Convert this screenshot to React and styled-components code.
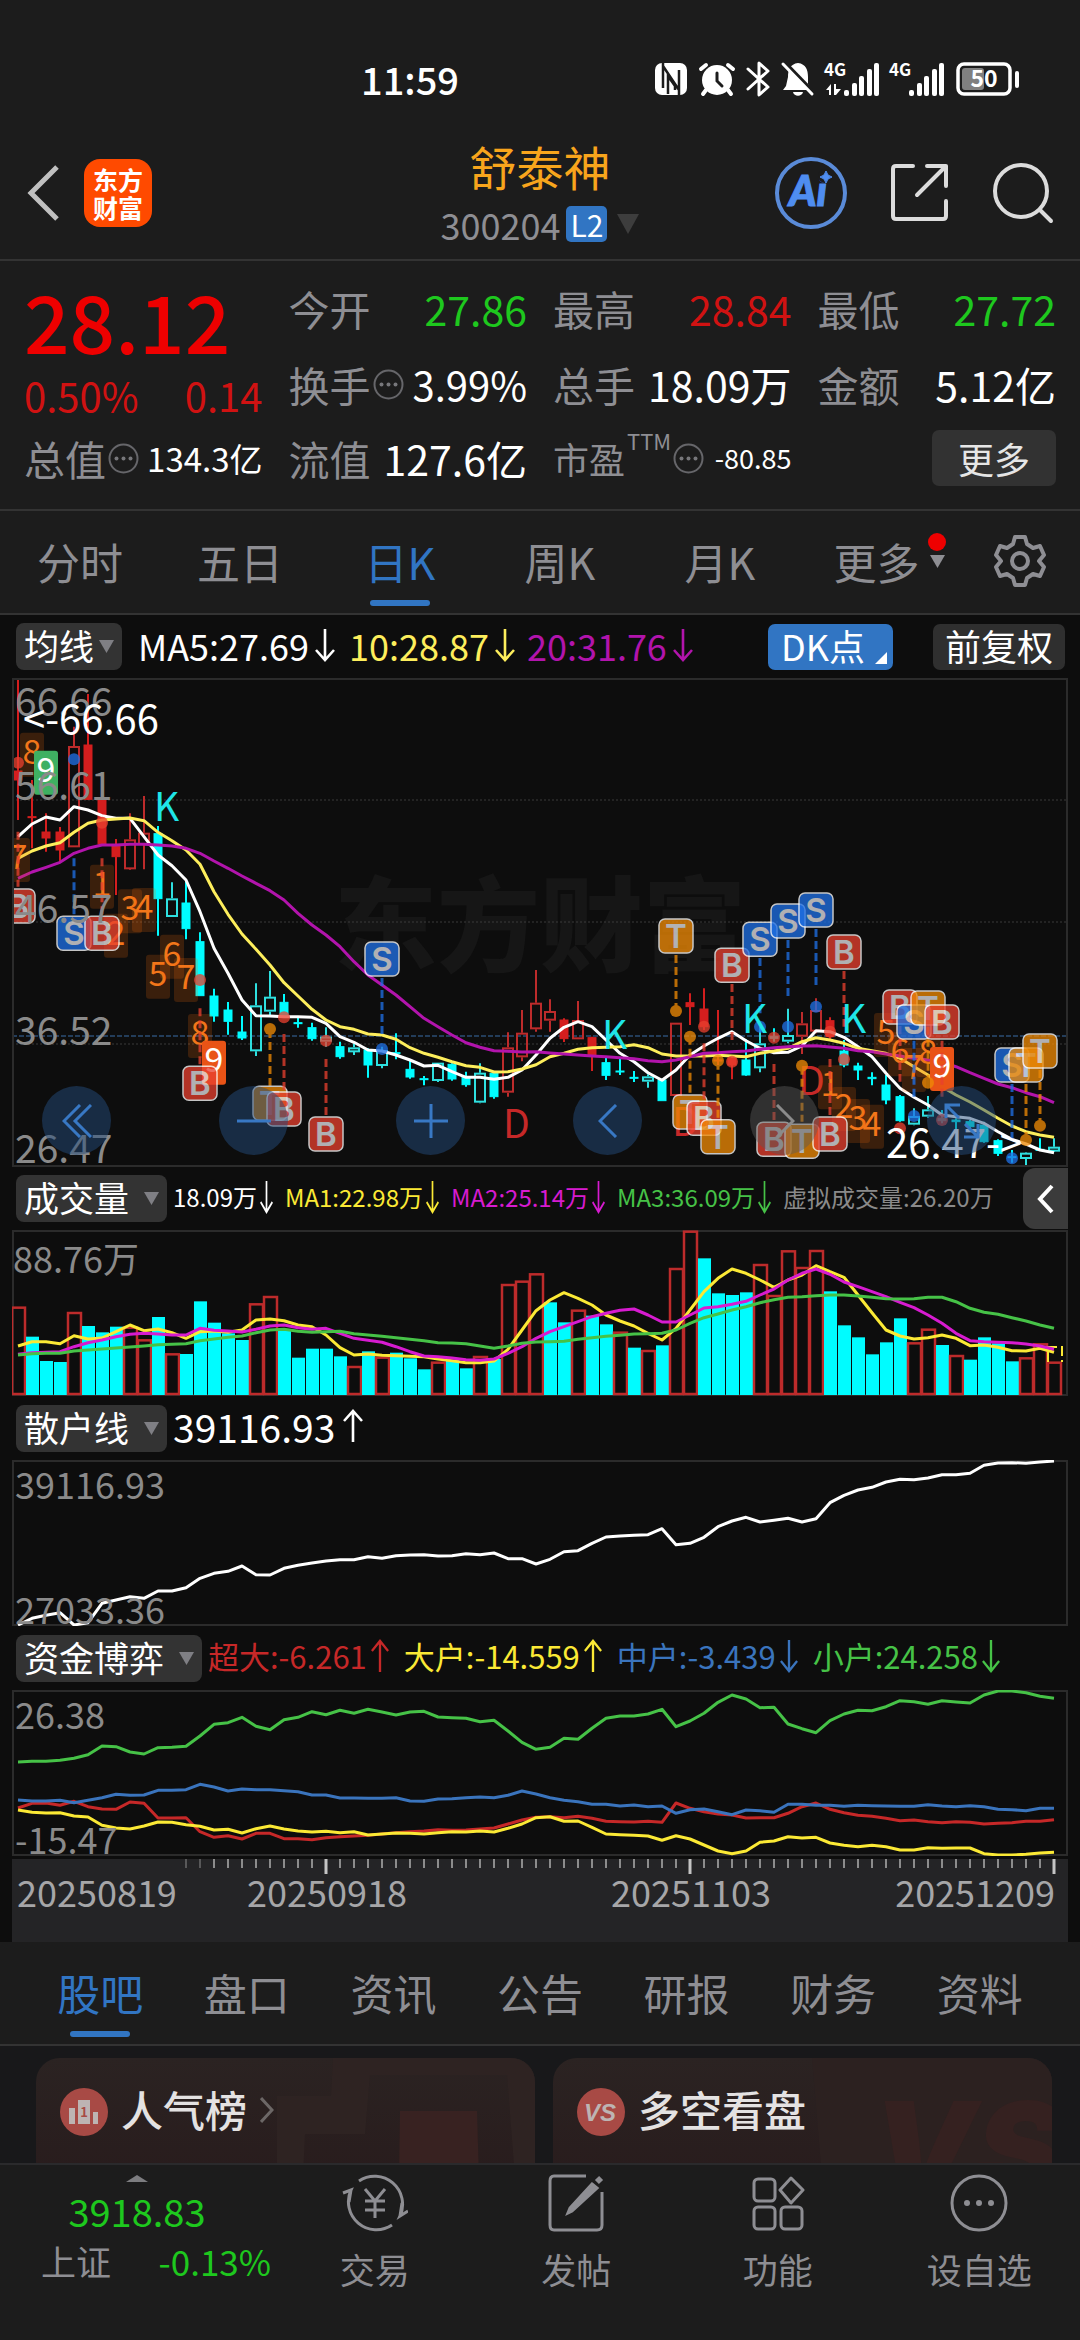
import React from 'react'
import styled, { createGlobalStyle } from 'styled-components'

const color = {
    page: '#1c1c1c',
    chart: '#0d0d0d',
    line: '#333333',
    frame: '#2b2b2b',
    grey: '#8e8e93',
    blue: '#3175c3',
    red: '#d01212',
    green: '#1ec81e',
    up: '#bd2b2b',
    down: '#00fcff',
    yellow: '#fbe935',
    purple: '#d71bd0',
    lime: '#46c247',
}

const GlobalStyle = createGlobalStyle`
    * {
        box-sizing: border-box;
    }

    body {
        margin: 0;
        background-color: ${color.page};
        font-family: "Noto Sans CJK SC", "Noto Sans", sans-serif;
        color: #FFFFFF;
    }

    button, select {
        margin: 0;
        padding: 0;
        border: none;
        background: none;
        font: inherit;
        color: inherit;
    }

    svg {
        display: block;
        flex-shrink: 0;
    }
`

const Page = styled.div`
    display: flex;
    flex-direction: column;
    height: 100vh;
    overflow: hidden;
`

/* status bar */

const StatusBar = styled.div`
    display: flex;
    justify-content: space-between;
    align-items: center;
    height: 120px;
    padding: 38px 60px 0 361px;
`

const Clock = styled.div`
    font-size: 38px;
    font-weight: 500;
    line-height: 40px;
`

const StatusIcons = styled.div`
    display: flex;
    align-items: center;
    gap: 12px;

    svg {
        overflow: visible;
    }
`

/* header */

const Header = styled.header`
    display: grid;
    grid-template-columns: 1fr auto 1fr;
    align-items: center;
    height: 141px;
    padding: 6px 26px 0;
    border-bottom: 2px solid ${color.line};
`

const HeaderSide = styled.div`
    display: flex;
    align-items: center;
    justify-content: ${(props) => props.$end ? 'flex-end' : 'flex-start'};
    gap: ${(props) => props.$end ? '42px' : '22px'};
`

const IconButton = styled.button`
    display: flex;
`

const Logo = styled.div`
    display: flex;
    align-items: center;
    justify-content: center;
    width: 68px;
    height: 68px;
    border-radius: 16px;
    background-color: #ff4a00;
    font-size: 25px;
    font-weight: 700;
    line-height: 28px;
    text-align: center;
`

const Title = styled.h1`
    margin: 0;
    font-size: 47px;
    font-weight: 400;
    line-height: 62px;
    color: #f8a51c;
    text-align: center;
`

const Code = styled.div`
    display: flex;
    align-items: center;
    justify-content: center;
    font-size: 36px;
    line-height: 54px;
    color: ${color.grey};
`

const Level = styled.span`
    margin: 0 10px 0 6px;
    padding: 0 4px;
    border-radius: 5px;
    background-color: ${color.blue};
    font-size: 30px;
    line-height: 36px;
    color: #FFFFFF;
`

/* quote */

const Quote = styled.section`
    display: grid;
    grid-template-columns: repeat(4, 1fr);
    column-gap: 26px;
    height: 250px;
    padding: 9px 24px 13px;
    border-bottom: 2px solid ${color.line};
`

const QuoteColumn = styled.div`
    display: grid;
    grid-template-rows: 76px 76px 72px;
`

const PriceBox = styled.div`
    grid-row: span 2;
    display: flex;
    flex-direction: column;
`

const Price = styled.div`
    font-size: 80px;
    font-weight: 500;
    line-height: 98px;
    color: #ee0000;
`

const Change = styled.div`
    display: flex;
    justify-content: space-between;
    font-size: 40px;
    line-height: 54px;
    color: ${color.red};
`

const Cell = styled.div`
    display: flex;
    align-items: center;
    justify-content: space-between;
    white-space: nowrap;
`

const Label = styled.span`
    display: flex;
    align-items: center;
    gap: 2px;
    font-size: ${(props) => props.$small ? '36px' : '41px'};
    line-height: 60px;
    color: ${color.grey};
`

const Sup = styled.sup`
    align-self: flex-start;
    font-size: 22px;
    line-height: 24px;
`

const Value = styled.span`
    font-size: ${(props) => props.$size || 41}px;
    line-height: 60px;
    color: ${(props) => props.$color || '#FFFFFF'};
`

const MoreButton = styled.button`
    width: 124px;
    height: 56px;
    margin-left: auto;
    border-radius: 7px;
    background-color: #323232;
    font-size: 36px;
    line-height: 50px;
    color: #e6e6e6;
`

/* tabs */

const Tabs = styled.nav`
    display: grid;
    grid-template-columns: ${(props) => props.$columns};
    height: 104px;
    padding: 0 ${(props) => props.$inset ? '27px' : '0'};
    border-bottom: 2px solid ${color.line};
`

const Tab = styled.button`
    position: relative;
    display: flex;
    align-items: center;
    justify-content: center;
    gap: 10px;
    min-width: 0;
    padding: 0 0 2px ${(props) => props.$menu ? '18px' : '0'};
    font-size: 43px;
    line-height: 60px;
    white-space: nowrap;
    color: ${(props) => props.$active ? color.blue : color.grey};

    &::after {
        content: '';
        display: ${(props) => props.$active ? 'block' : 'none'};
        position: absolute;
        bottom: 7px;
        left: 50%;
        width: 60px;
        height: 6px;
        margin-left: -30px;
        border-radius: 3px;
        background-color: ${color.blue};
    }
`

const Dot = styled.span`
    position: absolute;
    top: 22px;
    right: 14px;
    width: 18px;
    height: 18px;
    border-radius: 50%;
    background-color: #ee0000;
`

/* charts */

const Charts = styled.main`
    padding: 0 12px;
    background-color: ${color.chart};
`

const Bar = styled.div`
    display: flex;
    align-items: center;
    height: ${(props) => props.$height || 64}px;
    padding-left: 4px;
    gap: ${(props) => props.$gap || 6}px;
    white-space: nowrap;
`

const Picker = styled.label`
    position: relative;
    display: flex;
    align-items: center;
    border-radius: 8px;
    background-color: #333333;

    svg {
        position: absolute;
        right: 8px;
        pointer-events: none;
    }
`

const Select = styled.select`
    appearance: none;
    height: 47px;
    padding: 0 ${(props) => props.$tight ? '27px' : '37px'} 4px 8px;
    font-size: 35px;
    line-height: 43px;
`

const Reading = styled.span`
    display: flex;
    align-items: center;
    gap: ${(props) => props.$gap || 8}px;
    margin-right: ${(props) => props.$space || 6}px;
    padding-bottom: 4px;
    font-size: ${(props) => props.$size}px;
    line-height: 44px;
    color: ${(props) => props.$color || '#FFFFFF'};
`

const Tools = styled.div`
    display: flex;
    gap: 40px;
    margin-left: auto;
    padding-right: 3px;
`

const Tool = styled.button`
    position: relative;
    display: flex;
    align-items: center;
    height: 46px;
    padding: 0 ${(props) => props.$active ? '28px 3px 13px' : '12px 3px'};
    border-radius: 7px;
    background-color: ${(props) => props.$active ? color.blue : '#2f2f2f'};
    font-size: 36px;
    line-height: 43px;

    svg {
        position: absolute;
        right: 6px;
        bottom: 6px;
    }
`

const Pane = styled.div`
    position: relative;
`

const Chart = styled.svg`
    width: 100%;
    height: auto;
    font-family: "Noto Sans CJK SC", sans-serif;
`

const ChartButtons = styled.div`
    position: absolute;
    right: 72px;
    bottom: 12px;
    left: 30px;
    display: flex;
    justify-content: space-between;
`

const RoundButton = styled.button`
    display: flex;
    align-items: center;
    justify-content: center;
    width: 69px;
    height: 69px;
    border-radius: 50%;
    background-color: ${(props) => props.$off ? 'rgba(90, 90, 90, 0.45)' : 'rgba(36, 76, 124, 0.5)'};
    color: ${(props) => props.$off ? '#8b8b8b' : '#3878c4'};
`

const Collapse = styled.button`
    display: flex;
    align-items: center;
    justify-content: center;
    width: 45px;
    height: 61px;
    margin-left: auto;
    border-radius: 12px 0 0 12px;
    background-color: #3b3b3b;
`

const Axis = styled.div`
    margin-top: 3px;
    background-color: #242426;
`

/* cards */

const Cards = styled.section`
    display: grid;
    grid-template-columns: 1fr 1fr;
    gap: 18px;
    flex: 1;
    min-height: 0;
    padding: 12px 28px 0 36px;
    overflow: hidden;
    background-color: #18181a;
`

const Card = styled.article`
    position: relative;
    display: flex;
    align-items: flex-start;
    gap: 13px;
    min-height: 140px;
    padding: 24px;
    border-radius: 24px;
    overflow: hidden;
    background: linear-gradient(#2b2322, #281b1c);
    font-size: 42px;
    font-weight: 500;
    line-height: 54px;
    color: #e4e2e2;

    > svg {
        margin-top: 6px;
    }
`

const CardArt = styled.div`
    position: absolute;
    top: 0;
    right: 0;
`

/* bottom bar */

const BottomBar = styled.footer`
    display: flex;
    height: 177px;
    border-top: 2px solid #2a2a2c;
    background-color: ${color.page};
`

const Market = styled.button`
    display: flex;
    flex-direction: column;
    align-items: center;
    width: 274px;
    padding-top: 10px;
    font-size: 38px;
    line-height: 50px;
    color: ${color.green};

    > svg {
        margin-bottom: 4px;
    }
`

const MarketRow = styled.span`
    display: flex;
    justify-content: space-between;
    width: 230px;
    margin-left: 38px;
    font-size: 35px;
`

const Muted = styled.span`
    color: ${color.grey};
`

const Action = styled.button`
    display: flex;
    flex: 1;
    flex-direction: column;
    align-items: center;
    gap: 11px;
    padding-top: 8px;
    font-size: 35px;
    line-height: 50px;
    color: ${color.grey};
`

const STEP = 14
const LEFT = 6
const xOf = (i) => LEFT + i * STEP

// [high, body top, body bottom, low, kind] in thirds of a pixel.
// kind: R / C solid, r / c hollow
const candles = [
    [24, 303, 330, 450, 'R'], [330, 440, 443, 535, 'R'], [430, 486, 504, 545, 'R'], [471, 486, 540, 576, 'R'],
    [170, 228, 532, 532, 'r'], [72, 225, 388, 390, 'R'], [360, 388, 522, 522, 'R'], [507, 528, 560, 675, 'R'],
    [430, 508, 598, 600, 'r'], [378, 488, 525, 598, 'r'], [468, 491, 686, 797, 'C'], [637, 685, 741, 741, 'c'],
    [632, 699, 776, 808, 'C'], [787, 815, 977, 977, 'C'], [956, 978, 1038, 1055, 'C'], [996, 1020, 1054, 1094, 'C'],
    [1038, 1086, 1104, 1110, 'C'], [940, 1006, 1144, 1158, 'c'], [903, 980, 1025, 1035, 'c'], [972, 997, 1040, 1040, 'C'],
    [1038, 1058, 1061, 1073, 'C'], [1058, 1073, 1106, 1112, 'C'], [1072, 1100, 1115, 1130, 'c'], [1115, 1130, 1160, 1166, 'C'],
    [1120, 1132, 1145, 1155, 'c'], [1135, 1140, 1185, 1223, 'C'], [1130, 1140, 1188, 1195, 'c'], [1090, 1148, 1151, 1168, 'C'],
    [1173, 1198, 1221, 1226, 'C'], [1218, 1226, 1229, 1246, 'C'], [1178, 1178, 1233, 1236, 'c'], [1180, 1183, 1227, 1232, 'C'],
    [1205, 1220, 1244, 1250, 'C'], [1180, 1208, 1298, 1300, 'c'], [1208, 1210, 1280, 1286, 'C'], [1087, 1132, 1268, 1280, 'r'],
    [1020, 1088, 1162, 1174, 'r'], [900, 998, 1078, 1085, 'r'], [988, 1023, 1052, 1085, 'r'], [1045, 1050, 1106, 1116, 'R'],
    [993, 1050, 1108, 1108, 'r'], [1100, 1103, 1158, 1203, 'R'], [1160, 1178, 1216, 1230, 'C'], [1165, 1203, 1206, 1215, 'C'],
    [1203, 1222, 1225, 1236, 'C'], [1213, 1219, 1235, 1253, 'c'], [1226, 1230, 1292, 1292, 'C'], [1058, 1058, 1278, 1278, 'r'],
    [970, 998, 1010, 1065, 'R'], [955, 1017, 1070, 1080, 'R'], [1020, 1170, 1173, 1185, 'R'], [1160, 1165, 1185, 1228, 'R'],
    [1108, 1170, 1215, 1217, 'C'], [1070, 1120, 1195, 1207, 'c'], [1075, 1100, 1105, 1115, 'C'], [1016, 1095, 1115, 1120, 'c'],
    [1026, 1060, 1100, 1152, 'r'], [985, 1020, 1085, 1090, 'r'], [1042, 1052, 1100, 1110, 'R'], [1110, 1143, 1185, 1192, 'C'],
    [1178, 1188, 1200, 1230, 'C'], [1207, 1222, 1226, 1246, 'C'], [1215, 1245, 1290, 1303, 'C'], [1275, 1280, 1352, 1355, 'C'],
    [1315, 1338, 1364, 1366, 'c'], [1278, 1318, 1340, 1343, 'c'], [1320, 1345, 1352, 1360, 'C'], [1345, 1350, 1355, 1385, 'C'],
    [1350, 1355, 1370, 1380, 'C'], [1355, 1365, 1415, 1418, 'C'], [1408, 1412, 1450, 1458, 'C'], [1440, 1460, 1463, 1478, 'C'],
    [1447, 1448, 1467, 1490, 'c'], [1405, 1438, 1441, 1442, 'C'], [1405, 1430, 1441, 1445, 'c'],
]

const ma5 = [500, 462, 441, 450, 410, 420, 437, 445, 445, 500, 555, 587, 630, 725, 835, 910, 990, 1037, 1038, 1040, 1040, 1042, 1060, 1100, 1117, 1140, 1143, 1155, 1170, 1188, 1186, 1205, 1222, 1222, 1228, 1222, 1200, 1155, 1105, 1072, 1055, 1070, 1110, 1150, 1175, 1208, 1231, 1200, 1155, 1128, 1105, 1085, 1112, 1135, 1148, 1147, 1128, 1082, 1085, 1102, 1130, 1160, 1210, 1255, 1282, 1305, 1335, 1340, 1345, 1360, 1385, 1408, 1422, 1440, 1448]
const ma10 = [565, 543, 528, 518, 487, 460, 450, 447, 444, 452, 487, 512, 540, 583, 665, 733, 792, 838, 885, 938, 978, 1018, 1050, 1070, 1078, 1092, 1095, 1108, 1133, 1150, 1162, 1175, 1187, 1192, 1206, 1205, 1197, 1184, 1160, 1150, 1138, 1133, 1132, 1130, 1124, 1133, 1152, 1158, 1158, 1158, 1156, 1158, 1160, 1150, 1143, 1135, 1115, 1103, 1110, 1120, 1135, 1142, 1150, 1165, 1190, 1215, 1250, 1275, 1296, 1320, 1345, 1368, 1385, 1395, 1402]
const ma20 = [625, 606, 592, 577, 550, 535, 525, 525, 523, 523, 525, 528, 535, 550, 573, 595, 618, 640, 662, 690, 730, 765, 795, 830, 875, 915, 945, 975, 1010, 1045, 1070, 1095, 1118, 1132, 1142, 1144, 1146, 1145, 1149, 1152, 1155, 1158, 1160, 1163, 1166, 1172, 1175, 1170, 1160, 1150, 1148, 1145, 1143, 1138, 1133, 1130, 1128, 1127, 1131, 1135, 1142, 1145, 1152, 1158, 1165, 1170, 1177, 1190, 1208, 1225, 1242, 1253, 1268, 1280, 1298]

// [letter, day, badge y, dash from, dash to, dot y]
const signals = [
    ['B', 0, 708, 485, 650, 278], ['S', 4, 790, 565, 735, 268], ['B', 6, 790, 565, 735, 458], ['B', 13, 1240, 1015, 1185, 930],
    ['T', 18, 1300, 1080, 1248, 1077], ['B', 19, 1317, 1092, 1260, 1042], ['B', 22, 1392, 1167, 1335, 1112], ['S', 26, 867, 924, 1095, 1137],
    ['T', 47, 798, 855, 1010, 1023], ['T', 48, 1326, 1100, 1270, 1100], ['B', 49, 1345, 1120, 1290, 1070], ['T', 50, 1400, 1175, 1345, 1172],
    ['B', 51, 886, 942, 1110, 1175], ['S', 53, 808, 864, 1030, 1070], ['S', 55, 753, 810, 978, 1070], ['S', 57, 720, 777, 945, 1010],
    ['B', 54, 1408, 1182, 1350, 1103], ['T', 56, 1414, 1190, 1355, 1187], ['B', 58, 1392, 1167, 1335, 1085], ['B', 59, 846, 903, 1070, 1168],
    ['B', 63, 1011, 1068, 1235, 1375], ['S', 64, 1056, 1112, 1280, 1338], ['T', 65, 1014, 1070, 1235, 1238], ['B', 66, 1056, 1112, 1280, 1350],
    ['S', 71, 1185, 1242, 1410, 1465], ['T', 72, 1185, 1242, 1408, 1410], ['T', 73, 1143, 1200, 1350, 1367],
]

const signalColor = { B: '#e8402f', S: '#1f70e6', T: '#f08a05' }

// [digit, day, center y, background for the ninth day]
const counts = [
    ['8', 1, 254], ['9', 2, 308, '#3fb062'], ['7', 0, 570], ['1', 6, 650], ['2', 7, 797], ['3', 8, 724], ['4', 9, 720],
    ['5', 10, 920], ['6', 11, 860], ['7', 12, 930], ['8', 13, 1098], ['9', 14, 1178, '#e95316'],
    ['1', 58, 1252], ['2', 59, 1317], ['3', 60, 1353], ['4', 61, 1370], ['5', 62, 1095], ['6', 63, 1153], ['7', 64, 1200],
    ['8', 65, 1155], ['9', 66, 1197, '#e95316'],
]

const volumes = '440r 530c 603c 606c 456r 498c 517c 500c 500r 538r 471c 580r 582c 424c 488c 520c 540c 430r 408r 512c 593c 566c 566c 589c 618r 574c 590r 578c 595c 628c 605r 600c 625c 588r 597c 372r 362r 340r 427c 487c 449r 467c 493c 515r 563c 570r 556c 324r 212r 295c 400c 405c 397c 312r 405r 271r 321r 270r 394c 496c 532c 583c 547c 475c 547r 506r 555c 585r 599c 532c 550c 604c 592r 550r 605r'.split(' ')

const vol1 = [558, 545, 545, 551, 527, 537, 534, 515, 495, 512, 507, 518, 535, 515, 513, 517, 510, 480, 477, 482, 495, 500, 525, 563, 585, 582, 586, 587, 589, 590, 597, 602, 608, 608, 603, 568, 510, 452, 420, 398, 415, 435, 465, 483, 498, 520, 540, 505, 450, 395, 355, 327, 340, 360, 382, 360, 345, 317, 335, 352, 405, 458, 510, 528, 537, 533, 525, 535, 557, 555, 562, 572, 573, 565, 577]
const vol2 = [583, 578, 577, 575, 560, 548, 540, 530, 523, 520, 522, 525, 525, 505, 511, 513, 516, 508, 498, 495, 503, 508, 505, 520, 535, 541, 547, 560, 575, 588, 590, 594, 599, 601, 597, 580, 560, 535, 515, 500, 485, 470, 460, 451, 447, 465, 486, 486, 465, 444, 440, 433, 424, 405, 387, 360, 340, 327, 343, 366, 380, 395, 410, 427, 443, 465, 490, 520, 542, 545, 547, 548, 552, 558, 568]
const vol3 = [585, 581, 580, 580, 573, 570, 567, 564, 561, 558, 554, 553, 551, 542, 537, 532, 528, 518, 510, 508, 514, 517, 515, 514, 521, 525, 529, 533, 538, 542, 548, 549, 551, 558, 565, 558, 550, 546, 545, 544, 538, 533, 529, 526, 522, 521, 520, 510, 490, 473, 462, 450, 440, 428, 419, 412, 410, 407, 405, 405, 408, 412, 416, 417, 416, 412, 412, 425, 445, 457, 463, 473, 483, 495, 505]

const retail = [675, 655, 646, 638, 675, 668, 610, 600, 590, 595, 573, 573, 563, 535, 520, 514, 498, 524, 525, 505, 496, 489, 483, 479, 479, 470, 475, 467, 465, 464, 468, 467, 461, 464, 459, 476, 476, 492, 478, 455, 452, 430, 411, 408, 406, 404, 386, 434, 430, 412, 380, 363, 352, 366, 361, 355, 366, 356, 308, 286, 270, 262, 246, 238, 239, 234, 224, 224, 220, 196, 189, 188, 190, 186, 183]

const fundSmall = [396, 394, 394, 391, 385, 374, 348, 350, 366, 372, 353, 352, 349, 318, 283, 278, 262, 289, 299, 269, 262, 245, 254, 241, 250, 238, 246, 255, 246, 244, 261, 263, 265, 275, 271, 303, 337, 358, 352, 325, 328, 295, 265, 258, 258, 252, 238, 290, 273, 250, 217, 195, 207, 233, 232, 282, 296, 308, 272, 252, 241, 242, 230, 212, 215, 223, 212, 216, 219, 195, 183, 183, 188, 199, 205]
const fundMiddle = [510, 513, 513, 511, 518, 511, 503, 493, 496, 495, 481, 481, 479, 463, 471, 483, 477, 479, 479, 482, 485, 495, 495, 504, 504, 505, 505, 503, 513, 514, 507, 506, 503, 501, 503, 496, 483, 492, 503, 511, 515, 523, 523, 528, 525, 530, 528, 550, 539, 537, 545, 554, 540, 542, 547, 523, 523, 526, 526, 529, 526, 527, 528, 529, 529, 524, 528, 530, 527, 530, 538, 539, 542, 535, 535]
const fundHuge = [534, 520, 519, 526, 514, 530, 537, 538, 516, 520, 564, 564, 563, 605, 622, 617, 627, 610, 610, 626, 626, 629, 623, 620, 618, 616, 612, 608, 605, 603, 599, 601, 600, 597, 594, 582, 570, 562, 560, 563, 559, 565, 574, 575, 576, 574, 577, 519, 535, 545, 552, 555, 564, 563, 563, 550, 530, 519, 538, 548, 556, 559, 565, 572, 570, 575, 578, 575, 577, 582, 580, 578, 574, 574, 569]
const fundBig = [540, 547, 549, 548, 558, 561, 586, 594, 597, 588, 576, 577, 584, 589, 600, 598, 609, 596, 588, 597, 603, 606, 604, 608, 605, 615, 612, 609, 610, 612, 608, 605, 606, 603, 606, 595, 582, 563, 560, 574, 573, 592, 612, 614, 616, 618, 631, 617, 627, 645, 663, 671, 663, 637, 633, 620, 624, 622, 639, 646, 650, 646, 650, 660, 660, 653, 655, 654, 654, 671, 675, 675, 673, 669, 667]

const Line = ({ data, top, stroke }) => (
    <polyline
        points={data.map((v, i) => `${xOf(i)},${((v - top) / 3).toFixed(1)}`).join(' ')}
        fill="none"
        stroke={stroke}
        strokeWidth="3"
        strokeLinejoin="round"
    />
)

const Frame = ({ height }) => (
    <rect x="1" y="1" width="1054" height={height - 2} fill="none" stroke={color.frame} strokeWidth="2" />
)

const Triangle = ({ size = 15, fill = '#7f7f84' }) => (
    <svg width={size} height={size - 2} viewBox="0 0 10 9" preserveAspectRatio="none">
        <path d="M0 0H10L5 9Z" fill={fill} />
    </svg>
)

const Arrow = ({ up, width = 20 }) => (
    <svg width={width} height="34" viewBox="0 0 20 34" preserveAspectRatio="none" fill="none" stroke="currentColor" strokeWidth="2.6">
        {up ? <path d="M10 33V2M1 12L10 2L19 12" /> : <path d="M10 1V32M1 22L10 32L19 22" />}
    </svg>
)

const Ellipsis = () => (
    <svg width="31" height="31" viewBox="0 0 31 31" fill="#77777b">
        <circle cx="15.500" cy="15.500" r="14" fill="none" stroke="#66666a" strokeWidth="2" />
        <circle cx="8.500" cy="15.500" r="2" />
        <circle cx="15.500" cy="15.500" r="2" />
        <circle cx="22.500" cy="15.500" r="2" />
    </svg>
)

const Signal = ({ data }) => (
    <svg width="53" height="34" viewBox="0 0 53 34" fill="#FFFFFF">
        <text x="-2" y="14" fontSize="17" fontWeight="700">4G</text>
        {data && <path d="M0 28L5 22V33H3V28ZM10 22V27H15L10 33H8V22Z" />}
        <rect x="18" y="28" width="5" height="6" rx="2" />
        <rect x="26" y="21" width="5" height="13" rx="2" />
        <rect x="33" y="14" width="5" height="20" rx="2" />
        <rect x="41" y="7" width="5" height="27" rx="2" />
        <rect x="48" y="1" width="5" height="33" rx="2" />
    </svg>
)

const IndicatorSelect = ({ name, tight }) => (
    <Picker>
        <Select aria-label={name} $tight={tight}>
            <option>{name}</option>
        </Select>
        <Triangle />
    </Picker>
)

const Candle = ({ i, data }) => {
    const [high, top, bottom, low, kind] = data.map((v) => typeof v === 'number' ? (v - 24) / 3 : v)
    const rising = kind.toLowerCase() === 'r'
    const hollow = kind === 'r' || kind === 'c'
    const fill = rising ? (hollow ? color.up : '#d41e1e') : (hollow ? '#2ee0e0' : color.down)
    const x = xOf(i)

    return (
        <g stroke={fill} strokeWidth="2">
            <path d={`M${x} ${high}V${top}M${x} ${bottom}V${low}`} />
            {hollow
                ? <rect x={x - 5} y={top + 1} width="10" height={Math.max(bottom - top - 2, 3)} fill="none" />
                : <rect x={x - 4} y={top} width="8" height={bottom - top} fill={fill} strokeWidth="1" />}
        </g>
    )
}

const SignalBadge = ({ data }) => {
    const [letter, day, y, from, to, dot] = data
    const x = xOf(day)
    const fill = signalColor[letter]
    const cy = (y - 24) / 3

    return (
        <g opacity="0.76">
            <path d={`M${x} ${(from - 24) / 3}V${(to - 24) / 3}`} stroke={fill} strokeWidth="3" strokeDasharray="8 4" />
            <circle cx={x} cy={(dot - 24) / 3} r="6" fill={fill} />
            <rect x={x - 17} y={cy - 17} width="34" height="34" rx="6" fill={fill} stroke="#FFFFFF" strokeWidth="1.500" />
            <text x={x} y={cy + 12} fontSize="33" fontWeight="600" fontFamily="Inter, sans-serif" textAnchor="middle" fill="#e4e4e8">{letter}</text>
        </g>
    )
}

const Count = ({ data }) => {
    const [digit, day, y, background] = data
    const x = xOf(day)
    const cy = (y - 24) / 3

    return (
        <g>
            <rect x={x - 12} y={cy - 22} width="24" height="44" rx="3" fill={background || '#f26a0c'} fillOpacity={background ? 1 : 0.2} />
            <text x={x} y={cy + 9} fontSize="34" textAnchor="middle" fill={background ? '#FFFFFF' : '#f3761a'}>{digit}</text>
        </g>
    )
}

const PriceChart = () => (
    <Chart viewBox="0 0 1056 489">
        <text x="322" y="286" fontSize="103" fontWeight="900" fill="#161616">东方财富</text>
        <path d="M0 122H1056M0 244H1056M0 366H1056" stroke="#3a3a3a" strokeWidth="1" strokeDasharray="2 2" />
        <path d="M0 358H1056" stroke="#3a6ea8" strokeWidth="1" strokeDasharray="5 2" />
        {candles.map((item, i) => <Candle key={i} i={i} data={item} />)}
        <Line data={ma5} top={24} stroke="#FFFFFF" />
        <Line data={ma10} top={24} stroke="#fdee5c" />
        <Line data={ma20} top={24} stroke="#b214ac" />
        <g fontSize="39" fill="#c62828">
            <text x="491" y="460">D</text>
            <text x="786" y="417">D</text>
            <text x="660" y="458">D</text>
        </g>
        {counts.map((item, i) => <Count key={i} data={item} />)}
        {signals.map((item, i) => <SignalBadge key={i} data={item} />)}
        <g fontSize="39" fill="#1fe5e8">
            <text x="142" y="143">K</text>
            <text x="590" y="371">K</text>
            <text x="730" y="355">K</text>
            <text x="829" y="355">K</text>
        </g>
        <g fontSize="39" fill="#8a8a8a">
            <text x="3" y="38">66.66</text>
            <text x="3" y="122">56.61</text>
            <text x="3" y="245">46.57</text>
            <text x="3" y="367">36.52</text>
            <text x="3" y="485">26.47</text>
        </g>
        <g fontSize="40" fill="#FFFFFF">
            <text x="11" y="56">&lt;-66.66</text>
            <text x="874" y="480">26.47-&gt;</text>
        </g>
        <Frame height={489} />
    </Chart>
)

const VolumeChart = () => (
    <Chart viewBox="0 0 1056 166">
        <Frame height={166} />
        <text x="1" y="43" fontSize="36" fill="#8a8a8a">88.76万</text>
        {volumes.map((item, i) => {
            const y = (parseInt(item, 10) - 210) / 3
            return item.endsWith('r')
                ? <rect key={i} x={xOf(i) - 6} y={y + 1} width="13" height={163 - y} fill="none" stroke={color.up} strokeWidth="2.500" />
                : <rect key={i} x={xOf(i) - 6} y={y} width="13" height={165 - y} fill={color.down} />
        })}
        <path d={`M${xOf(74) - 6} 132V117H${xOf(74) + 8}V132`} fill="none" stroke={color.yellow} strokeWidth="2" strokeDasharray="10 4" />
        <Line data={vol1} top={210} stroke={color.yellow} />
        <Line data={vol2} top={210} stroke={color.purple} />
        <Line data={vol3} top={210} stroke={color.lime} />
    </Chart>
)

const RetailChart = () => (
    <Chart viewBox="0 0 1056 166">
        <Frame height={166} />
        <Line data={retail} top={180} stroke="#FFFFFF" />
        <g fontSize="36" fill="#8a8a8a">
            <text x="3" y="39">39116.93</text>
            <text x="3" y="164">27033.36</text>
        </g>
    </Chart>
)

const FundChart = () => (
    <Chart viewBox="0 0 1056 166">
        <Frame height={166} />
        <Line data={fundSmall} top={180} stroke={color.lime} />
        <Line data={fundHuge} top={180} stroke="#c62828" />
        <Line data={fundMiddle} top={180} stroke="#3a74bd" />
        <Line data={fundBig} top={180} stroke={color.yellow} />
        <g fontSize="36" fill="#8a8a8a">
            <text x="3" y="39">26.38</text>
            <text x="3" y="164">-15.47</text>
        </g>
    </Chart>
)

const majorTicks = [22, 48, 74]

const TimeAxis = () => (
    <Axis>
        <Chart viewBox="0 0 1056 83">
            {Array.from({ length: 63 }, (_, n) => n + 12).map((i) => (
                <path
                    key={i}
                    d={`M${xOf(i)} 0V${majorTicks.includes(i) ? 15 : 9}`}
                    stroke={majorTicks.includes(i) ? '#c4c4c4' : '#8c8c8c'}
                    strokeOpacity={i < 14 ? 0.5 : 1}
                    strokeWidth={majorTicks.includes(i) ? 3 : 2}
                />
            ))}
            <g fontSize="36" fill="#a6a6a8">
                <text x="5" y="48">20250819</text>
                <text x="315" y="48" textAnchor="middle">20250918</text>
                <text x="679" y="48" textAnchor="middle">20251103</text>
                <text x="1043" y="48" textAnchor="end">20251209</text>
            </g>
        </Chart>
    </Axis>
)

const periods = ['分时', '五日', '日K', '周K', '月K']
const sections = ['股吧', '盘口', '资讯', '公告', '研报', '财务', '资料']

const volumeReadings = [
    ['18.09万', '#FFFFFF'],
    ['MA1:22.98万', color.yellow],
    ['MA2:25.14万', color.purple],
    ['MA3:36.09万', color.lime],
]

const fundReadings = [
    ['超大:-6.261', '#c62828', true],
    ['大户:-14.559', color.yellow, true],
    ['中户:-3.439', '#3a74bd', false],
    ['小户:24.258', color.lime, false],
]

const App = () => {
    return (
        <>
            <GlobalStyle />
            <Page>
                <StatusBar>
                    <Clock>11:59</Clock>
                    <StatusIcons>
                        <svg width="32" height="32" viewBox="0 0 32 32">
                            <rect width="32" height="32" rx="7" fill="#FFFFFF" />
                            <path d="M8 0V25M8 3L24 27M24 32V7M13 31V13L20 23V27" fill="none" stroke="#1c1c1c" strokeWidth="2.500" />
                        </svg>
                        <svg width="36" height="34" viewBox="0 0 36 34" stroke="#FFFFFF" strokeWidth="4" strokeLinecap="round">
                            <circle cx="18" cy="18" r="15" fill="#FFFFFF" stroke="none" />
                            <path d="M2 7L7 3M34 7L29 3M7 28L4 32M29 28L32 32" />
                            <path d="M18 11V19L23 24" fill="none" stroke="#1c1c1c" strokeWidth="3" />
                        </svg>
                        <svg width="23" height="36" viewBox="0 0 23 36" fill="none" stroke="#FFFFFF" strokeWidth="3">
                            <path d="M1 8L21 26L12 34V2L21 10L1 28" strokeLinejoin="round" strokeLinecap="round" />
                        </svg>
                        <svg width="32" height="34" viewBox="0 0 32 34" fill="#FFFFFF">
                            <path d="M16 1C8 2 6 8 6 15L4 24L1 28H29L26 22V15C26 8 24 2 16 1ZM11 30H21C20 35 12 35 11 30Z" />
                            <path d="M3 1L32 31" stroke="#1c1c1c" strokeWidth="4" />
                            <path d="M1 2L30 32" stroke="#FFFFFF" strokeWidth="3" strokeLinecap="round" />
                        </svg>
                        <Signal data />
                        <Signal />
                        <svg width="64" height="34" viewBox="0 0 64 34">
                            <rect x="2" y="2" width="52" height="30" rx="6" fill="none" stroke="#FFFFFF" strokeWidth="3.500" />
                            <rect x="6" y="6" width="22" height="22" rx="3" fill="#808080" />
                            <rect x="59" y="9" width="4" height="17" rx="2" fill="#FFFFFF" />
                            <text x="28" y="25" fontSize="23" fontWeight="700" textAnchor="middle" fill="#FFFFFF">50</text>
                        </svg>
                    </StatusIcons>
                </StatusBar>

                <Header>
                    <HeaderSide>
                        <IconButton aria-label="返回">
                            <svg width="36" height="56" viewBox="0 0 36 56" fill="none" stroke="#c0c0c0" strokeWidth="5">
                                <path d="M31 2L5 28L31 54" />
                            </svg>
                        </IconButton>
                        <Logo>东方<br />财富</Logo>
                    </HeaderSide>
                    <div>
                        <Title>舒泰神</Title>
                        <Code>300204<Level>L2</Level><Triangle size={22} fill="#3d3d3d" /></Code>
                    </div>
                    <HeaderSide $end>
                        <IconButton aria-label="智能助手">
                            <svg width="74" height="74" viewBox="0 0 74 74">
                                <circle cx="37" cy="37" r="34" fill="none" stroke="#5a8bd8" strokeWidth="4" />
                                <text x="34" y="50" fontSize="42" fontWeight="900" fontStyle="italic" fontFamily="Lato" textAnchor="middle" fill="#4f8df0" stroke="#4f8df0" strokeWidth="1">Ai</text>
                                <circle cx="51" cy="20" r="7" fill={color.page} />
                                <path d="M52 15Q53 20 58 21Q53 22 52 27Q51 22 46 21Q51 20 52 15Z" fill="#4f8df0" stroke="#4f8df0" />
                            </svg>
                        </IconButton>
                        <IconButton aria-label="分享">
                            <svg width="60" height="60" viewBox="0 0 60 60" fill="none" stroke="#dcdcdc" strokeWidth="4" strokeLinecap="round" strokeLinejoin="round">
                                <path d="M23 3H6Q3 3 3 6V53Q3 56 6 56H53Q56 56 56 53V38" />
                                <path d="M37 3H56V23M56 3L27 32" />
                            </svg>
                        </IconButton>
                        <IconButton aria-label="搜索">
                            <svg width="62" height="62" viewBox="0 0 62 62" fill="none" stroke="#dcdcdc" strokeWidth="4" strokeLinecap="round">
                                <circle cx="29" cy="29" r="26" />
                                <path d="M48 48L59 59" />
                            </svg>
                        </IconButton>
                    </HeaderSide>
                </Header>

                <Quote>
                    <QuoteColumn>
                        <PriceBox>
                            <Price>28.12</Price>
                            <Change><span>0.50%</span><span>0.14</span></Change>
                        </PriceBox>
                        <Cell><Label>总值<Ellipsis /></Label><Value $size={33}>134.3亿</Value></Cell>
                    </QuoteColumn>
                    <QuoteColumn>
                        <Cell><Label>今开</Label><Value $color={color.green}>27.86</Value></Cell>
                        <Cell><Label>换手<Ellipsis /></Label><Value $size={40}>3.99%</Value></Cell>
                        <Cell><Label>流值</Label><Value>127.6亿</Value></Cell>
                    </QuoteColumn>
                    <QuoteColumn>
                        <Cell><Label>最高</Label><Value $color={color.red}>28.84</Value></Cell>
                        <Cell><Label>总手</Label><Value>18.09万</Value></Cell>
                        <Cell><Label $small>市盈<Sup>TTM</Sup><Ellipsis /></Label><Value $size={27}>-80.85</Value></Cell>
                    </QuoteColumn>
                    <QuoteColumn>
                        <Cell><Label>最低</Label><Value $color={color.green}>27.72</Value></Cell>
                        <Cell><Label>金额</Label><Value>5.12亿</Value></Cell>
                        <Cell><MoreButton>更多</MoreButton></Cell>
                    </QuoteColumn>
                </Quote>

                <Tabs $columns="repeat(6, minmax(0, 4fr)) minmax(0, 3fr)">
                    {periods.map((name) => (
                        <Tab key={name} $active={name === '日K'}>{name}</Tab>
                    ))}
                    <Tab $menu>更多<Triangle size={15} fill={color.grey} /><Dot /></Tab>
                    <Tab aria-label="设置">
                        <svg width="52" height="54" viewBox="0 0 52 54" fill="none" stroke={color.grey} strokeWidth="4" strokeLinejoin="round">
                            <path d="M21 3H31L33 10L39 14L46 12L50 21L45 27L50 33L46 42L39 40L33 44L31 51H21L19 44L13 40L6 42L2 33L7 27L2 21L6 12L13 14L19 10Z" />
                            <circle cx="26" cy="27" r="8" />
                        </svg>
                    </Tab>
                </Tabs>

                <Charts>
                    <Bar $height={63} $gap={16}>
                        <IndicatorSelect name="均线" tight />
                        <Reading $size={36} $space={-2} $gap={6}>MA5:27.69<Arrow /></Reading>
                        <Reading $size={36} $color="#fdee5c" $space={-4} $gap={6}>10:28.87<Arrow /></Reading>
                        <Reading $size={36} $color="#b214ac" $gap={6}>20:31.76<Arrow /></Reading>
                        <Tools>
                            <Tool $active>
                                DK点
                                <svg width="12" height="12" viewBox="0 0 12 12"><path d="M12 0V12H0Z" fill="#FFFFFF" /></svg>
                            </Tool>
                            <Tool>前复权</Tool>
                        </Tools>
                    </Bar>
                    <Pane>
                        <PriceChart />
                        <ChartButtons>
                            <RoundButton aria-label="最早">
                                <svg width="30" height="34" viewBox="0 0 30 34" fill="none" stroke="currentColor" strokeWidth="3">
                                    <path d="M18 1L2 17L18 33M29 1L13 17L29 33" />
                                </svg>
                            </RoundButton>
                            <RoundButton aria-label="缩小">
                                <svg width="34" height="34" viewBox="0 0 34 34" stroke="currentColor" strokeWidth="3"><path d="M0 17H34" /></svg>
                            </RoundButton>
                            <RoundButton aria-label="放大">
                                <svg width="34" height="34" viewBox="0 0 34 34" stroke="currentColor" strokeWidth="3"><path d="M0 17H34M17 0V34" /></svg>
                            </RoundButton>
                            <RoundButton aria-label="向前">
                                <svg width="20" height="34" viewBox="0 0 20 34" fill="none" stroke="currentColor" strokeWidth="3"><path d="M18 1L2 17L18 33" /></svg>
                            </RoundButton>
                            <RoundButton $off aria-label="向后">
                                <svg width="20" height="34" viewBox="0 0 20 34" fill="none" stroke="currentColor" strokeWidth="3"><path d="M2 1L18 17L2 33" /></svg>
                            </RoundButton>
                            <RoundButton aria-label="全屏">
                                <svg width="36" height="36" viewBox="0 0 36 36" fill="none" stroke="currentColor" strokeWidth="3">
                                    <path d="M2 15V2H16M2 2L15 15M20 34H34V21M34 34L21 21" />
                                </svg>
                            </RoundButton>
                        </ChartButtons>
                    </Pane>

                    <Bar $height={63}>
                        <IndicatorSelect name="成交量" />
                        {volumeReadings.map(([text, tone]) => (
                            <Reading key={text} $size={24} $color={tone} $gap={3}>{text}<Arrow width={13} /></Reading>
                        ))}
                        <Reading $size={24} $color="#8a8a8a">虚拟成交量:26.20万</Reading>
                        <Collapse aria-label="收起">
                            <svg width="18" height="30" viewBox="0 0 18 30" fill="none" stroke="#FFFFFF" strokeWidth="4"><path d="M15 2L3 15L15 28" /></svg>
                        </Collapse>
                    </Bar>
                    <VolumeChart />

                    <Bar>
                        <IndicatorSelect name="散户线" />
                        <Reading $size={39}>39116.93<Arrow up /></Reading>
                    </Bar>
                    <RetailChart />

                    <Bar>
                        <IndicatorSelect name="资金博弈" />
                        {fundReadings.map(([text, tone, up]) => (
                            <Reading key={text} $size={31} $color={tone} $space={9} $gap={4}>{text}<Arrow up={up} width={18} /></Reading>
                        ))}
                    </Bar>
                    <FundChart />
                    <TimeAxis />
                </Charts>

                <Tabs $inset $columns="repeat(7, minmax(0, 1fr))">
                    {sections.map((name) => (
                        <Tab key={name} $active={name === '股吧'}>{name}</Tab>
                    ))}
                </Tabs>

                <Cards>
                    <Card>
                        <CardArt>
                            <svg width="260" height="120" viewBox="0 0 260 120">
                                <path d="M58 0H260V120H240L232 17H95L90 76H30L28 120H2V38H56Z" fill="#2e2322" />
                                <path d="M125 53H202L204 120H124Z" fill="#382221" />
                            </svg>
                        </CardArt>
                        <svg width="48" height="48" viewBox="0 0 48 48">
                            <circle cx="24" cy="24" r="24" fill="#a84a45" />
                            <path d="M9 20H15V36H9ZM18 12H30V36H18ZM33 24H38V36H33Z" fill="#bdb4b3" />
                            <text x="24" y="29" fontSize="13" fontWeight="700" textAnchor="middle" fill="#a84a45">1</text>
                        </svg>
                        人气榜
                        <svg width="14" height="44" viewBox="0 0 14 44" fill="none" stroke="#6c6766" strokeWidth="3"><path d="M1 10L12 22L1 34" /></svg>
                    </Card>
                    <Card>
                        <CardArt>
                            <svg width="240" height="120" viewBox="0 0 240 120">
                                <path d="M0 0H240V120H10Z" fill="#2c2120" />
                                <text x="60" y="138" fontSize="130" fontWeight="900" fontStyle="italic" fontFamily="Inter" fill="#352120">VS</text>
                            </svg>
                        </CardArt>
                        <svg width="48" height="48" viewBox="0 0 48 48">
                            <circle cx="24" cy="24" r="24" fill="#a84a45" />
                            <text x="23" y="33" fontSize="24" fontWeight="700" fontStyle="italic" fontFamily="Liberation Sans" textAnchor="middle" fill="#bdb4b3">VS</text>
                        </svg>
                        多空看盘
                    </Card>
                </Cards>

                <BottomBar>
                    <Market>
                        <svg width="22" height="7" viewBox="0 0 22 7"><path d="M0 7L11 0L22 7Z" fill="#7d7d80" /></svg>
                        <span>3918.83</span>
                        <MarketRow><Muted>上证</Muted><span>-0.13%</span></MarketRow>
                    </Market>
                    <Action>
                        <svg width="66" height="60" viewBox="0 0 66 60" fill="none" stroke="currentColor" strokeWidth="3">
                            <path d="M17 8A28 28 0 0 1 58 43L66 38M58 43L60 30M50 52A28 28 0 0 1 9 17L1 20M9 17L7 29" />
                            <path d="M23 16L33 28L43 16M23 28H43M23 37H43M33 28V45" />
                        </svg>
                        交易
                    </Action>
                    <Action>
                        <svg width="60" height="60" viewBox="0 0 60 60" fill="none" stroke="currentColor" strokeWidth="3">
                            <path d="M40 3H8Q4 3 4 8V52Q4 57 8 57H51Q56 57 56 52V19" />
                            <path d="M46 11L51 15L26 38L22 40L24 35Z" fill="currentColor" />
                            <path d="M51 5L55 9" strokeWidth="6" />
                        </svg>
                        发帖
                    </Action>
                    <Action>
                        <svg width="54" height="60" viewBox="0 0 54 60" fill="none" stroke="currentColor" strokeWidth="3">
                            <rect x="3" y="6" width="21" height="22" rx="4" />
                            <rect x="3" y="34" width="21" height="22" rx="4" />
                            <rect x="30" y="34" width="21" height="22" rx="4" />
                            <path d="M40 5L52 17L40 30L29 17Z" strokeLinejoin="round" />
                        </svg>
                        功能
                    </Action>
                    <Action>
                        <svg width="60" height="60" viewBox="0 0 60 60" fill="currentColor">
                            <circle cx="30" cy="30" r="27" fill="none" stroke="currentColor" strokeWidth="3" />
                            <circle cx="18" cy="30" r="3" />
                            <circle cx="30" cy="30" r="3" />
                            <circle cx="42" cy="30" r="3" />
                        </svg>
                        设自选
                    </Action>
                </BottomBar>
            </Page>
        </>
    )
}

export default App
